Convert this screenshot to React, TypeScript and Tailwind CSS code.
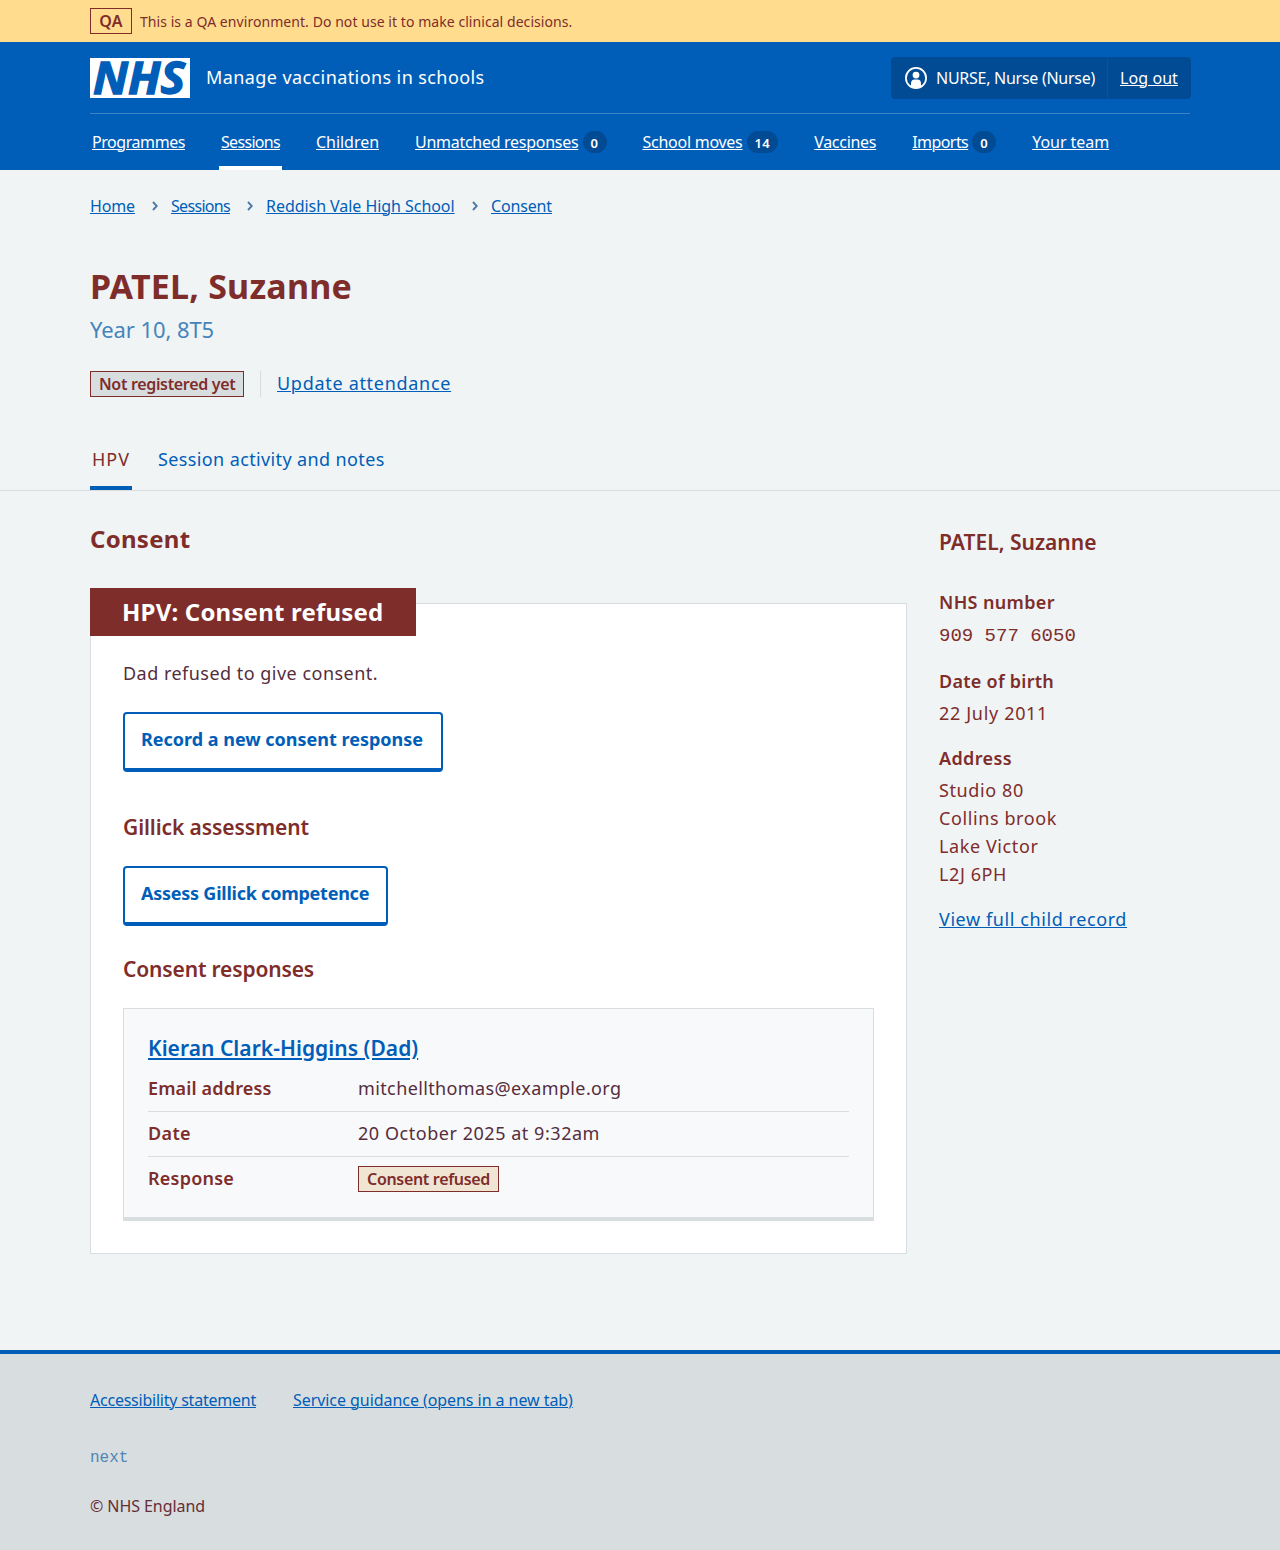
import React from "react";

const linkBase = "text-[#005eb8] underline decoration-1 underline-offset-[1px]";

function Badge({ children }: { children: React.ReactNode }) {
  return (
    <span className="ml-1 flex h-[22px] min-w-[24px] items-center justify-center rounded-full bg-[#004b93] px-2 pt-px text-[13px] leading-5 font-semibold tracking-[0.4px] text-white no-underline">
      {children}
    </span>
  );
}

type NavItem = { label: string; fit: string; count?: number; current?: boolean };

const navItems: NavItem[] = [
  { label: "Programmes", fit: "w-[93px] tracking-[-0.44px]" },
  { label: "Sessions", fit: "w-[59px] tracking-[-0.69px]", current: true },
  { label: "Children", fit: "w-[63px] tracking-[-0.04px]" },
  { label: "Unmatched responses", fit: "w-[163.500px] tracking-[-0.28px]", count: 0 },
  { label: "School moves", fit: "w-[100px] tracking-[-0.26px]", count: 14 },
  { label: "Vaccines", fit: "w-[62px] tracking-[-0.29px]" },
  { label: "Imports", fit: "w-[56px] tracking-[-0.56px]", count: 0 },
  { label: "Your team", fit: "w-[77px] tracking-[-0.04px]" },
];

const crumbs = [
  { label: "Home", fit: "w-[45px] tracking-[-0.13px]" },
  { label: "Sessions", fit: "w-[59px] tracking-[-0.69px]" },
  { label: "Reddish Vale High School", fit: "w-[189px] tracking-[-0.05px]" },
  { label: "Consent", fit: "w-[61px] tracking-[-0.15px]" },
];

function Logo() {
  return (
    <svg className="h-10 w-[100px] shrink-0 overflow-visible" viewBox="0 0 100 40" role="img" aria-label="NHS">
      <rect width="100" height="40" fill="#fff" />
      <text
        x="3"
        y="36"
        textLength="92"
        lengthAdjust="spacingAndGlyphs"
        fill="#005eb8"
        stroke="#005eb8"
        strokeWidth="1.3"
        fontFamily="'Open Sans', 'Noto Sans', sans-serif"
        fontWeight="700"
        fontStyle="italic"
        fontSize="44"
      >
        NHS
      </text>
    </svg>
  );
}

function UserIcon() {
  return (
    <svg className="size-[22px] shrink-0" viewBox="0 0 22 22">
      <circle cx="11" cy="11" r="10.1" fill="none" stroke="#fff" strokeWidth="1.8" />
      <circle cx="11" cy="8.1" r="3.4" fill="#fff" />
      <path d="M6 19.3V16.4C6 14 7.4 12.4 9.4 12.4h3.2C14.6 12.4 16 14 16 16.4v2.9C14.6 20.3 12.9 20.9 11 20.9s-3.600-.6-5-1.600z" fill="#fff" />
    </svg>
  );
}

function Header() {
  return (
    <header className="h-32 bg-[#005eb8] text-white">
      <div className="mx-auto w-[1100px]">
        <div className="flex h-[72px] justify-between border-b border-[#3f83c6] pt-[15px]">
          <div className="flex pt-px">
            <Logo />
            <span className="ml-4 pt-[5px] text-[18px] leading-7 tracking-[0.41px]">Manage vaccinations in schools</span>
          </div>
          <div className="-mr-px flex h-[42px] w-[300px] items-center rounded bg-[#004b93] text-[16px] leading-6">
            <div className="flex h-10 w-[217px] items-center gap-[9px] border-r border-[#0056ab] pl-[14px]">
              <UserIcon />
              <span className="whitespace-nowrap tracking-[-0.27px]">NURSE, Nurse (Nurse)</span>
            </div>
            <a className="ml-3 underline decoration-1 underline-offset-[1px] tracking-[0.08px]">Log out</a>
          </div>
        </div>
        <nav className="flex h-14 gap-8 text-[16px] leading-6">
          {navItems.map((n) => (
            <a
              key={n.label}
              className={
                n.current
                  ? "flex h-14 items-center border-b-4 border-white px-0.5 pt-1"
                  : "flex h-14 items-center px-0.5"
              }
            >
              <span className={`whitespace-nowrap underline decoration-1 underline-offset-[1px] ${n.fit}`}>{n.label}</span>
              {n.count !== undefined && <Badge>{n.count}</Badge>}
            </a>
          ))}
        </nav>
      </div>
    </header>
  );
}

function Button({ children, className }: { children: React.ReactNode; className: string }) {
  return (
    <button
      className={`flex h-[60px] items-start rounded border-2 border-b-4 border-[#005eb8] bg-white pt-[11px] pl-4 text-[18px] leading-7 font-bold whitespace-nowrap text-[#005eb8] ${className}`}
    >
      {children}
    </button>
  );
}

function SummaryRow({ label, fit, children, last }: { label: string; fit: string; children: React.ReactNode; last?: boolean }) {
  return (
    <div className={last ? "flex h-[45px] pt-[7px]" : "flex h-[45px] border-b border-[#d8dde0] pt-[7px]"}>
      <dt className={`w-[210px] font-semibold ${fit}`}>{label}</dt>
      <dd>{children}</dd>
    </div>
  );
}

export default function App() {
  return (
    <div className="flex min-h-[1550px] flex-col bg-[#f0f4f5] font-['Noto_Sans','Open_Sans',sans-serif] text-[18px] leading-7 text-[#7e2d2b]">
      <div className="h-[42px] bg-[#ffdc8e]">
        <div className="mx-auto flex h-full w-[1100px] items-center gap-2">
          <strong className="flex h-[26px] w-[42px] justify-center border border-[#7e2d2b] text-[16px] leading-6 font-semibold tracking-[0.2px]">QA</strong>
          <span className="pt-0.5 text-[14px] leading-6 tracking-[0.06px]">
            This is a QA environment. Do not use it to make clinical decisions.
          </span>
        </div>
      </div>
      <Header />

      <div className="mx-auto w-[1100px] pt-6">
        <ol className="flex h-6 text-[16px] leading-6">
          {crumbs.map((c, i) => (
            <li key={c.label} className="flex">
              {i > 0 && (
                <svg className="mt-[7px] mr-[13px] ml-[17px] h-[10px] w-[6px]" viewBox="0 0 6 10">
                  <path d="M1 1l3.800 4L1 9" fill="none" stroke="#4a7ba8" strokeWidth="1.900" />
                </svg>
              )}
              <a className={`whitespace-nowrap ${linkBase} ${c.fit}`}>{c.label}</a>
            </li>
          ))}
        </ol>
        <h1 className="mt-[46px] text-[34px] leading-[45px] font-bold tracking-[0.2px]">PATEL, Suzanne</h1>
        <p className="mt-[5px] text-[22px] leading-[30px] tracking-[-0.09px] text-[#4584bb]">Year 10, 8T5</p>
        <div className="mt-[27px] flex h-[26px]">
          <strong className="w-[154px] border border-[#7e2d2b] bg-[#d8dde0] pl-2 text-[16px] leading-6 font-semibold tracking-[-0.33px] whitespace-nowrap">
            Not registered yet
          </strong>
          <div className="ml-4 border-l border-[#d8dde0] pl-4">
            <a className={`-mt-0.5 block tracking-[0.7px] ${linkBase}`}>Update attendance</a>
          </div>
        </div>
      </div>

      <div className="mt-12 border-b border-[#d8dde0]">
        <div className="mx-auto flex h-[45px] w-[1100px] gap-6">
          <a className="w-[42px] border-b-4 border-[#005eb8] px-0.5 tracking-[0.99px]">HPV</a>
          <a className="px-0.5 tracking-[0.38px] text-[#005eb8]">Session activity and notes</a>
        </div>
      </div>

      <main className="mx-auto grid w-[1100px] grid-cols-[817px_251px] gap-8">
        <section className="pt-[29px]">
          <h2 className="text-[24px] leading-[37px] font-bold tracking-[0.28px]">Consent</h2>
          <div className="mt-[46px] h-[651px] border border-[#d8dde0] bg-white px-8">
            <h3 className="-mt-4 -ml-[33px] h-12 w-[326px] bg-[#7e2d2b] pl-8 text-[24px] leading-[47px] font-bold tracking-[0.19px] whitespace-nowrap text-white">
              HPV: Consent refused
            </h3>
            <p className="mt-[23px] tracking-[0.48px] text-[#552d3d]">Dad refused to give consent.</p>
            <Button className="mt-[25px] w-[320px] tracking-[-0.01px]">Record a new consent response</Button>
            <h4 className="mt-[39px] text-[21px] leading-8 font-semibold tracking-[-0.1px]">Gillick assessment</h4>
            <Button className="mt-[23px] w-[265px] tracking-[-0.24px]">Assess Gillick competence</Button>
            <h4 className="mt-[27px] text-[21px] leading-8 font-semibold tracking-[-0.15px]">Consent responses</h4>
            <div className="mt-[23px] h-[213px] border border-b-4 border-[#d8dde0] bg-[#f8f9fb] px-6 pt-[23px]">
              <div className="h-[30px]">
                <a className="text-[21px] leading-8 font-semibold tracking-[0.04px] text-[#005eb8] underline decoration-2 underline-offset-[2px]">
                  Kieran Clark-Higgins (Dad)
                </a>
              </div>
              <dl className="mt-[5px]">
                <SummaryRow label="Email address" fit="tracking-[0.15px]">
                  <span className="tracking-[0.38px] text-[#552d3d]">mitchellthomas@example.org</span>
                </SummaryRow>
                <SummaryRow label="Date" fit="tracking-[0.37px]">
                  <span className="tracking-[0.54px] text-[#552d3d]">20 October 2025 at 9:32am</span>
                </SummaryRow>
                <SummaryRow label="Response" fit="tracking-[0.22px]" last>
                  <strong className="mt-0.5 block h-[26px] w-[141px] border border-[#7e2d2b] bg-[#f0e4d3] pl-2 text-[16px] leading-6 font-semibold tracking-[-0.32px] whitespace-nowrap">
                    Consent refused
                  </strong>
                </SummaryRow>
              </dl>
            </div>
          </div>
        </section>

        <aside className="pt-[35px]">
          <h2 className="text-[21px] leading-8 font-semibold">PATEL, Suzanne</h2>
          <h3 className="mt-[30px] font-semibold tracking-[0.36px]">NHS number</h3>
          <p className="mt-1.5 font-['Liberation_Mono',monospace] text-[19px]">909 577 6050</p>
          <h3 className="mt-[17px] font-semibold tracking-[0.26px]">Date of birth</h3>
          <p className="mt-1 tracking-[0.67px]">22 July 2011</p>
          <h3 className="mt-[17px] font-semibold tracking-[0.38px]">Address</h3>
          <p className="mt-1 tracking-[0.6px]">
            Studio 80
            <br />
            Collins brook
            <br />
            Lake Victor
            <br />
            L2J 6PH
          </p>
          <a className={`mt-[17px] block tracking-[0.59px] ${linkBase}`}>View full child record</a>
        </aside>
      </main>

      <footer className="mt-24 h-[200px] border-t-4 border-[#005eb8] bg-[#d8dde0] text-[16px] leading-6">
        <div className="mx-auto w-[1100px] pt-[34px]">
          <div className="flex gap-[37px]">
            <a className={`w-[166px] tracking-[-0.23px] whitespace-nowrap ${linkBase}`}>Accessibility statement</a>
            <a className={`tracking-[-0.06px] ${linkBase}`}>Service guidance (opens in a new tab)</a>
          </div>
          <p className="mt-[34px] font-['Liberation_Mono',monospace] text-[#4f86b5]">next</p>
          <p className="mt-6 tracking-[-0.07px] text-[#662d35]">© NHS England</p>
        </div>
      </footer>
    </div>
  );
}
